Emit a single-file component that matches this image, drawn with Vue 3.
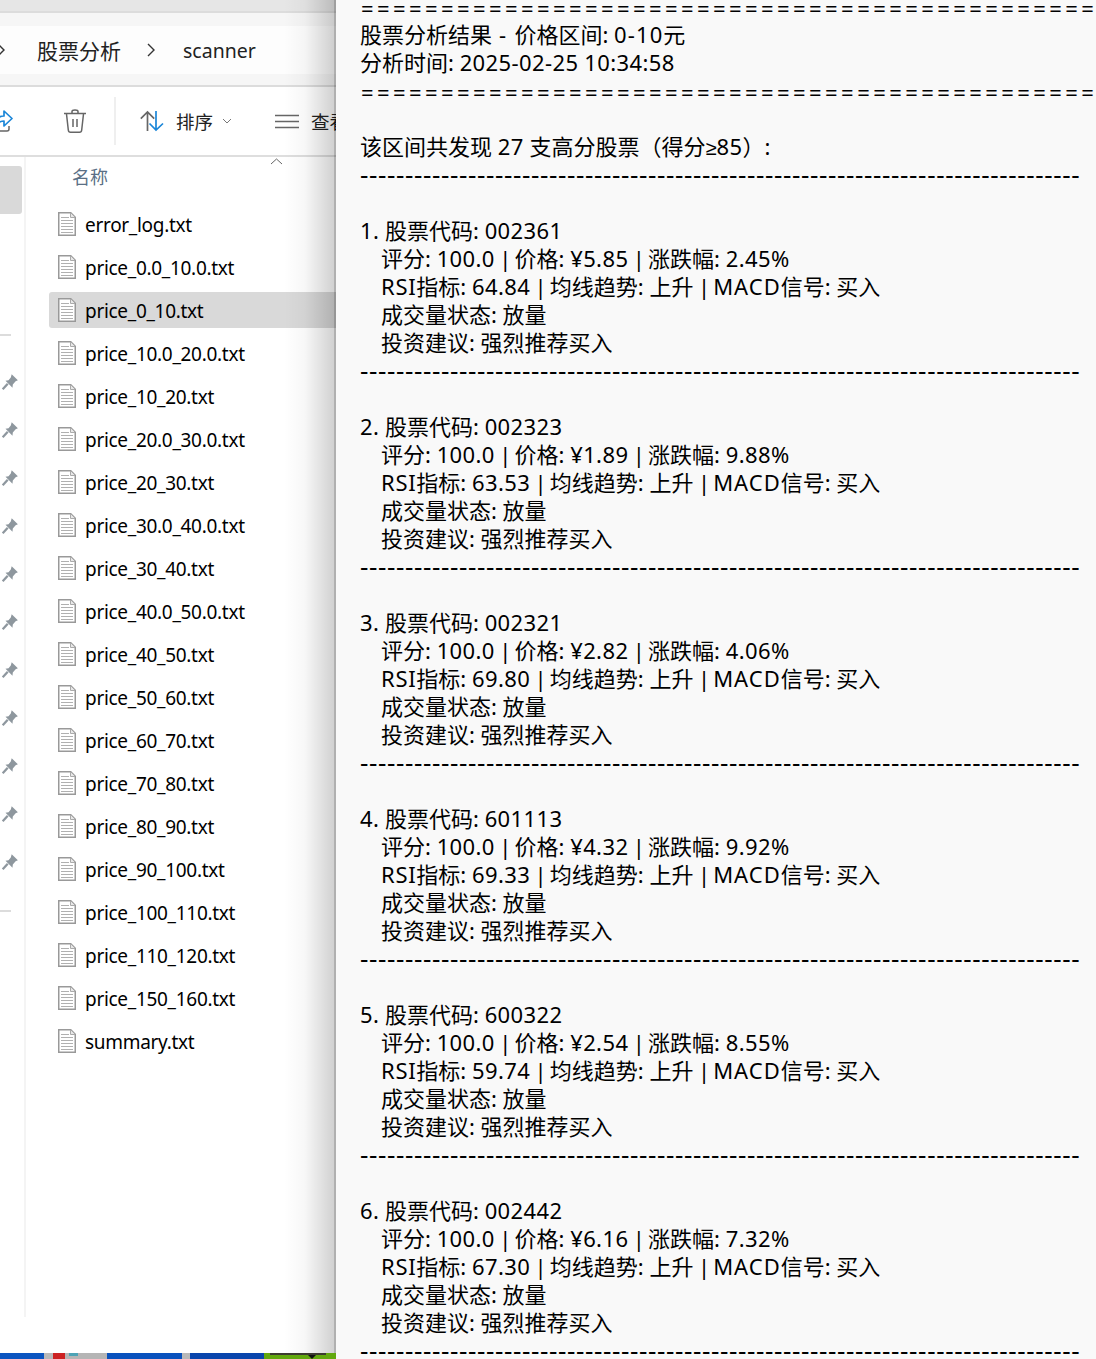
<script setup>
const files = ['error_log.txt','price_0.0_10.0.txt','price_0_10.txt','price_10.0_20.0.txt','price_10_20.txt','price_20.0_30.0.txt','price_20_30.txt','price_30.0_40.0.txt','price_30_40.txt','price_40.0_50.0.txt','price_40_50.txt','price_50_60.txt','price_60_70.txt','price_70_80.txt','price_80_90.txt','price_90_100.txt','price_100_110.txt','price_110_120.txt','price_150_160.txt','summary.txt']
const pins = Array.from({ length: 11 })
const stocks = [
  ['002361','¥5.85','2.45%','64.84'],
  ['002323','¥1.89','9.88%','63.53'],
  ['002321','¥2.82','4.06%','69.80'],
  ['601113','¥4.32','9.92%','69.33'],
  ['600322','¥2.54','8.55%','59.74'],
  ['002442','¥6.16','7.32%','67.30'],
]
const eq = '='.repeat(46)
const dash = '-'.repeat(80)

// Splits a text line so digit runs and separators can get their own tracking.
function seg(text) {
  return text.split(/( \| | - |≥|RSI|MACD|[¥\d][\d.:\-%]*)/).filter(Boolean).map((t) => {
    let c = ''
    if (t === ' | ') c = 'pipe'
    else if (t === ' - ') c = 'spaced'
    else if (t === '≥') c = 'gte'
    else if (t === 'RSI') c = 'rsi'
    else if (t === 'MACD') c = 'macd'
    else if (t === '0-10') c = 'num wide'
    else if (/^[¥\d]/.test(t)) c = 'num'
    return { t, c }
  })
}
const lines = (s, i) => [
  { text: `${i + 1}. 股票代码: ${s[0]}`, ind: false },
  { text: `评分: 100.0 | 价格: ${s[1]} | 涨跌幅: ${s[2]}`, ind: true },
  { text: `RSI指标: ${s[3]} | 均线趋势: 上升 | MACD信号: 买入`, ind: true },
  { text: '成交量状态: 放量', ind: true },
  { text: '投资建议: 强烈推荐买入', ind: true },
]
const head1 = seg('股票分析结果 - 价格区间: 0-10元')
const head2 = seg('分析时间: 2025-02-25 10:34:58')
const head3 = seg('该区间共发现 27 支高分股票（得分≥85）:')
</script>

<template>
  <div class="page">
    <aside class="explorer">
      <div class="topstrip"></div>
      <div class="addressband">
        <div class="address">
          <svg class="chev first" width="10" height="16" viewBox="0 0 10 16"><path d="M1 2l6 6-6 6" fill="none" stroke="#333" stroke-width="1.4"/></svg>
          <span class="crumb">股票分析</span>
          <svg class="chev" width="10" height="16" viewBox="0 0 10 16"><path d="M1 2l6 6-6 6" fill="none" stroke="#333" stroke-width="1.4"/></svg>
          <span class="crumb latin">scanner</span>
        </div>
      </div>
      <div class="toolbar">
        <svg class="share" width="20" height="24" viewBox="0 0 20 24"><path d="M3 11c1-3 4-4 7-4V2l8 7.500-8 7.500v-5c-3 0-5 1-7 3" fill="none" stroke="#1b86d8" stroke-width="1.7" stroke-linejoin="round"/><path d="M15 17v3c0 1-1 2-2 2H0" fill="none" stroke="#666" stroke-width="1.500"/></svg>
        <svg class="trash" width="22" height="24" viewBox="0 0 22 24"><path d="M0 4.500h22M8 4V2.500C8 1.500 9 1 11 1s3 .5 3 1.500V4M2.500 5l1.800 16c.1 1.300 1 2.200 2.200 2.200h9c1.200 0 2.100-.9 2.200-2.200L19.500 5M9 10v8M13 10v8" fill="none" stroke="#666" stroke-width="1.500"/></svg>
        <div class="sep"></div>
        <svg class="sort" width="24" height="22" viewBox="0 0 24 22"><path d="M7.500 21V2M.8 8.700L7.500 2l6.700 6.700" fill="none" stroke="#666" stroke-width="1.700"/><path d="M16 1v19M9.500 13.500L16 20l7-6.500" fill="none" stroke="#1b86d8" stroke-width="1.700"/></svg>
        <span class="tool-label">排序</span>
        <svg class="caret" width="10" height="6" viewBox="0 0 10 6"><path d="M1 1l4 4 4-4" fill="none" stroke="#777"/></svg>
        <svg class="lines" width="24" height="15" viewBox="0 0 24 15"><path d="M0 1.500h24M0 7.500h24M0 13.500h24" stroke="#666" stroke-width="1.400"/></svg>
        <span class="tool-label view">查看</span>
      </div>
      <div class="body">
        <nav class="nav">
          <div class="nav-selected"></div>
          <div class="nav-line first-line"></div>
          <div class="pins">
            <svg v-for="(_, i) in pins" :key="i" width="18" height="18" viewBox="0 0 16 16"><path d="M9.500 1l5.500 5.500-2 .8-2.500 3-.3 2.700L4 6.800l2.700-.3 2-2.500z" fill="#8e979e"/><path d="M6 9.500L1.500 14.500" stroke="#8e979e" stroke-width="2"/></svg>
          </div>
          <div class="nav-line"></div>
        </nav>
        <main class="list">
          <svg class="sort-up" width="13" height="7" viewBox="0 0 13 7"><path d="M1 6l5.500-5L12 6" fill="none" stroke="#666"/></svg>
          <div class="col-head">名称</div>
          <div v-for="f in files" :key="f" class="file" :class="{ selected: f === 'price_0_10.txt' }">
            <svg width="18" height="24" viewBox="0 0 18 24"><path d="M.75.750h12l4.500 4.500v18H.75z" fill="#fff" stroke="#999" stroke-width="1.500"/><path d="M12.500 1v4.500H17" fill="#e8e8e8" stroke="#aaa"/><path d="M3 5.500h8M3 8.500h12M3 11.500h12M3 14.500h12M3 17.500h12M3 20.500h12" stroke="#b0b0b0" stroke-width="1.200"/></svg>
            <span>{{ f }}</span>
          </div>
        </main>
      </div>
      <div class="shade"></div>
      <div class="taskbar">
        <i class="b1"></i><i class="b2"></i><i class="b3"></i><i class="b4"><b class="teal"></b></i><i class="b5"></i><i class="b2 thin"></i><i class="b6"></i><i class="b7"><b class="dark"></b><b class="tri"></b></i>
      </div>
    </aside>
    <section class="notepad">
      <div class="line rule-eq">{{ eq }}</div>
      <div class="line"><span v-for="(p, k) in head1" :key="k" :class="p.c">{{ p.t }}</span></div>
      <div class="line"><span v-for="(p, k) in head2" :key="k" :class="p.c">{{ p.t }}</span></div>
      <div class="line rule-eq">{{ eq }}</div>
      <div class="line">&nbsp;</div>
      <div class="line"><span v-for="(p, k) in head3" :key="k" :class="p.c">{{ p.t }}</span></div>
      <div class="line rule-dash">{{ dash }}</div>
      <div class="line">&nbsp;</div>
      <template v-for="(s, i) in stocks" :key="s[0]">
        <div v-for="(l, n) in lines(s, i)" :key="n" class="line" :class="{ ind: l.ind }"><span v-for="(p, k) in seg(l.text)" :key="k" :class="p.c">{{ p.t }}</span></div>
        <div class="line rule-dash">{{ dash }}</div>
        <div class="line">&nbsp;</div>
      </template>
    </section>
  </div>
</template>

<style>
html, body { margin: 0; background: #f9f9f9; }
</style>

<style scoped>
.page {
  display: flex;
  width: 1096px;
  height: 1359px;
  overflow: hidden;
  font-family: "Noto Sans", "Noto Sans CJK SC", sans-serif;
  color: #000;
}
.explorer {
  position: relative;
  flex: 0 0 336px;
  display: flex;
  flex-direction: column;
  overflow: hidden;
  background: #fff;
}
.topstrip { height: 11px; background: #e6e6e6; border-bottom: 2px solid #dcdcdc; }
.addressband { background: #f6f6f6; padding-top: 13px; box-sizing: border-box; border-bottom: 2px solid #dcdcdc; height: 74px; }
.address { height: 48px; background: #fdfdfd; display: flex; align-items: center; font-size: 21px; color: #222; }
.chev.first { margin-left: -3px; }
.address .crumb { margin-left: 30px; }
.address .crumb + .chev { margin-left: 26px; }
.address .crumb.latin { margin-left: 26px; font-size: 19.500px; }
.toolbar { flex: none; border-bottom: 2px solid #dedede; display: flex; align-items: center; color: #222; background: #fff; height: 68px; }
.toolbar > * { flex: none; }
.share { margin-left: -6px; }
.trash { margin-left: 50px; }
.sep { width: 2px; height: 48px; background: #efefef; margin-left: 28px; }
.sort { margin-left: 24px; }
.tool-label { font-size: 18.500px; margin-left: 12px; white-space: nowrap; }
.caret { margin-left: 9px; }
.lines { margin-left: 43px; }
.tool-label.view { margin-left: 12px; }
.body { flex: 1; display: flex; min-height: 0; }
.nav { width: 24px; flex: none; border-right: 2px solid #f4f4f4; margin-bottom: 42px; position: relative; display: flex; flex-direction: column; }
.nav-selected { position: absolute; left: 0; top: 9px; width: 22px; height: 48px; background: #d9d9d9; border-radius: 0 3px 3px 0; }
.nav-line { height: 2px; width: 11px; background: #dcdcdc; }
.first-line { margin-top: 177px; }
.pins { display: flex; flex-direction: column; gap: 30px; padding: 37px 0 39px 1px; }
.list { flex: 1; position: relative; min-width: 0; padding: 0 0 0 23px; }
.sort-up { position: absolute; left: 244px; top: 1px; }
.col-head { height: 49px; padding: 6px 0 0 23px; box-sizing: border-box; font-size: 18px; line-height: 28px; color: #5a6f85; }
.file { height: 36px; margin-bottom: 7px; display: flex; align-items: center; font-size: 19px; letter-spacing: -0.3px; white-space: nowrap; padding-left: 9px; border-radius: 3px 0 0 3px; }
.file svg { flex: none; margin-right: 9px; }
.file span { position: relative; top: 1px; }
.file.selected { background: #d9d9d9; }
.shade {
  position: absolute; inset: 0 0 0 auto; width: 52px;
  pointer-events: none;
  background: linear-gradient(90deg, rgba(0,0,0,0) 0, rgba(0,0,0,.03) 40%, rgba(0,0,0,.18) 96%, rgba(0,0,0,.31) 96%, rgba(0,0,0,.31) 100%);
}
.taskbar { position: absolute; left: 0; right: 0; bottom: 0; height: 6px; display: flex; }
.taskbar i { display: block; height: 100%; position: relative; }
.taskbar b { position: absolute; display: block; }
.b1 { width: 44px; background: #0c55c0; }
.b2 { width: 9px; background: #b9b9b9; }
.b2.thin { width: 8px; }
.b3 { width: 12px; background: #cc2222; }
.b4 { width: 42px; background: #b5b5b5; }
.teal { left: 4px; top: 0; width: 9px; height: 3px; background: #4da3b5; }
.b5 { width: 75px; background: #0a52bd; }
.b6 { width: 74px; background: #0a45ac; }
.b7 { flex: 1; background: #62a80e; }
.dark { left: 6px; top: 0; width: 56px; height: 2px; background: #3c3c30; }
.tri { left: 44px; top: 2px; width: 0; height: 0; border-left: 4px solid transparent; border-right: 4px solid transparent; border-top: 4px solid #111; }
.notepad {
  flex: 1;
  min-width: 0;
  background: #f9f9f9;
  padding: 0 0 0 24px;
  margin-top: -8px;
  font-size: 22px;
  line-height: 28px;
  overflow: hidden;
}
.line { height: 28px; white-space: pre; }
.ind { padding-left: 21px; }
.rule-eq { line-height: 32px; letter-spacing: 3.420px; padding-left: 1px; }
.rule-dash { font-size: 26px; line-height: 28px; letter-spacing: .630px; }
.num { letter-spacing: .4px; }
.num.wide { letter-spacing: 1.100px; }
.pipe { letter-spacing: -1.300px; }
.spaced { letter-spacing: 1.300px; }
.rsi { letter-spacing: .7px; }
.macd { letter-spacing: 1px; }
.gte { font-family: "Liberation Sans", sans-serif; font-size: 20px; }
</style>
